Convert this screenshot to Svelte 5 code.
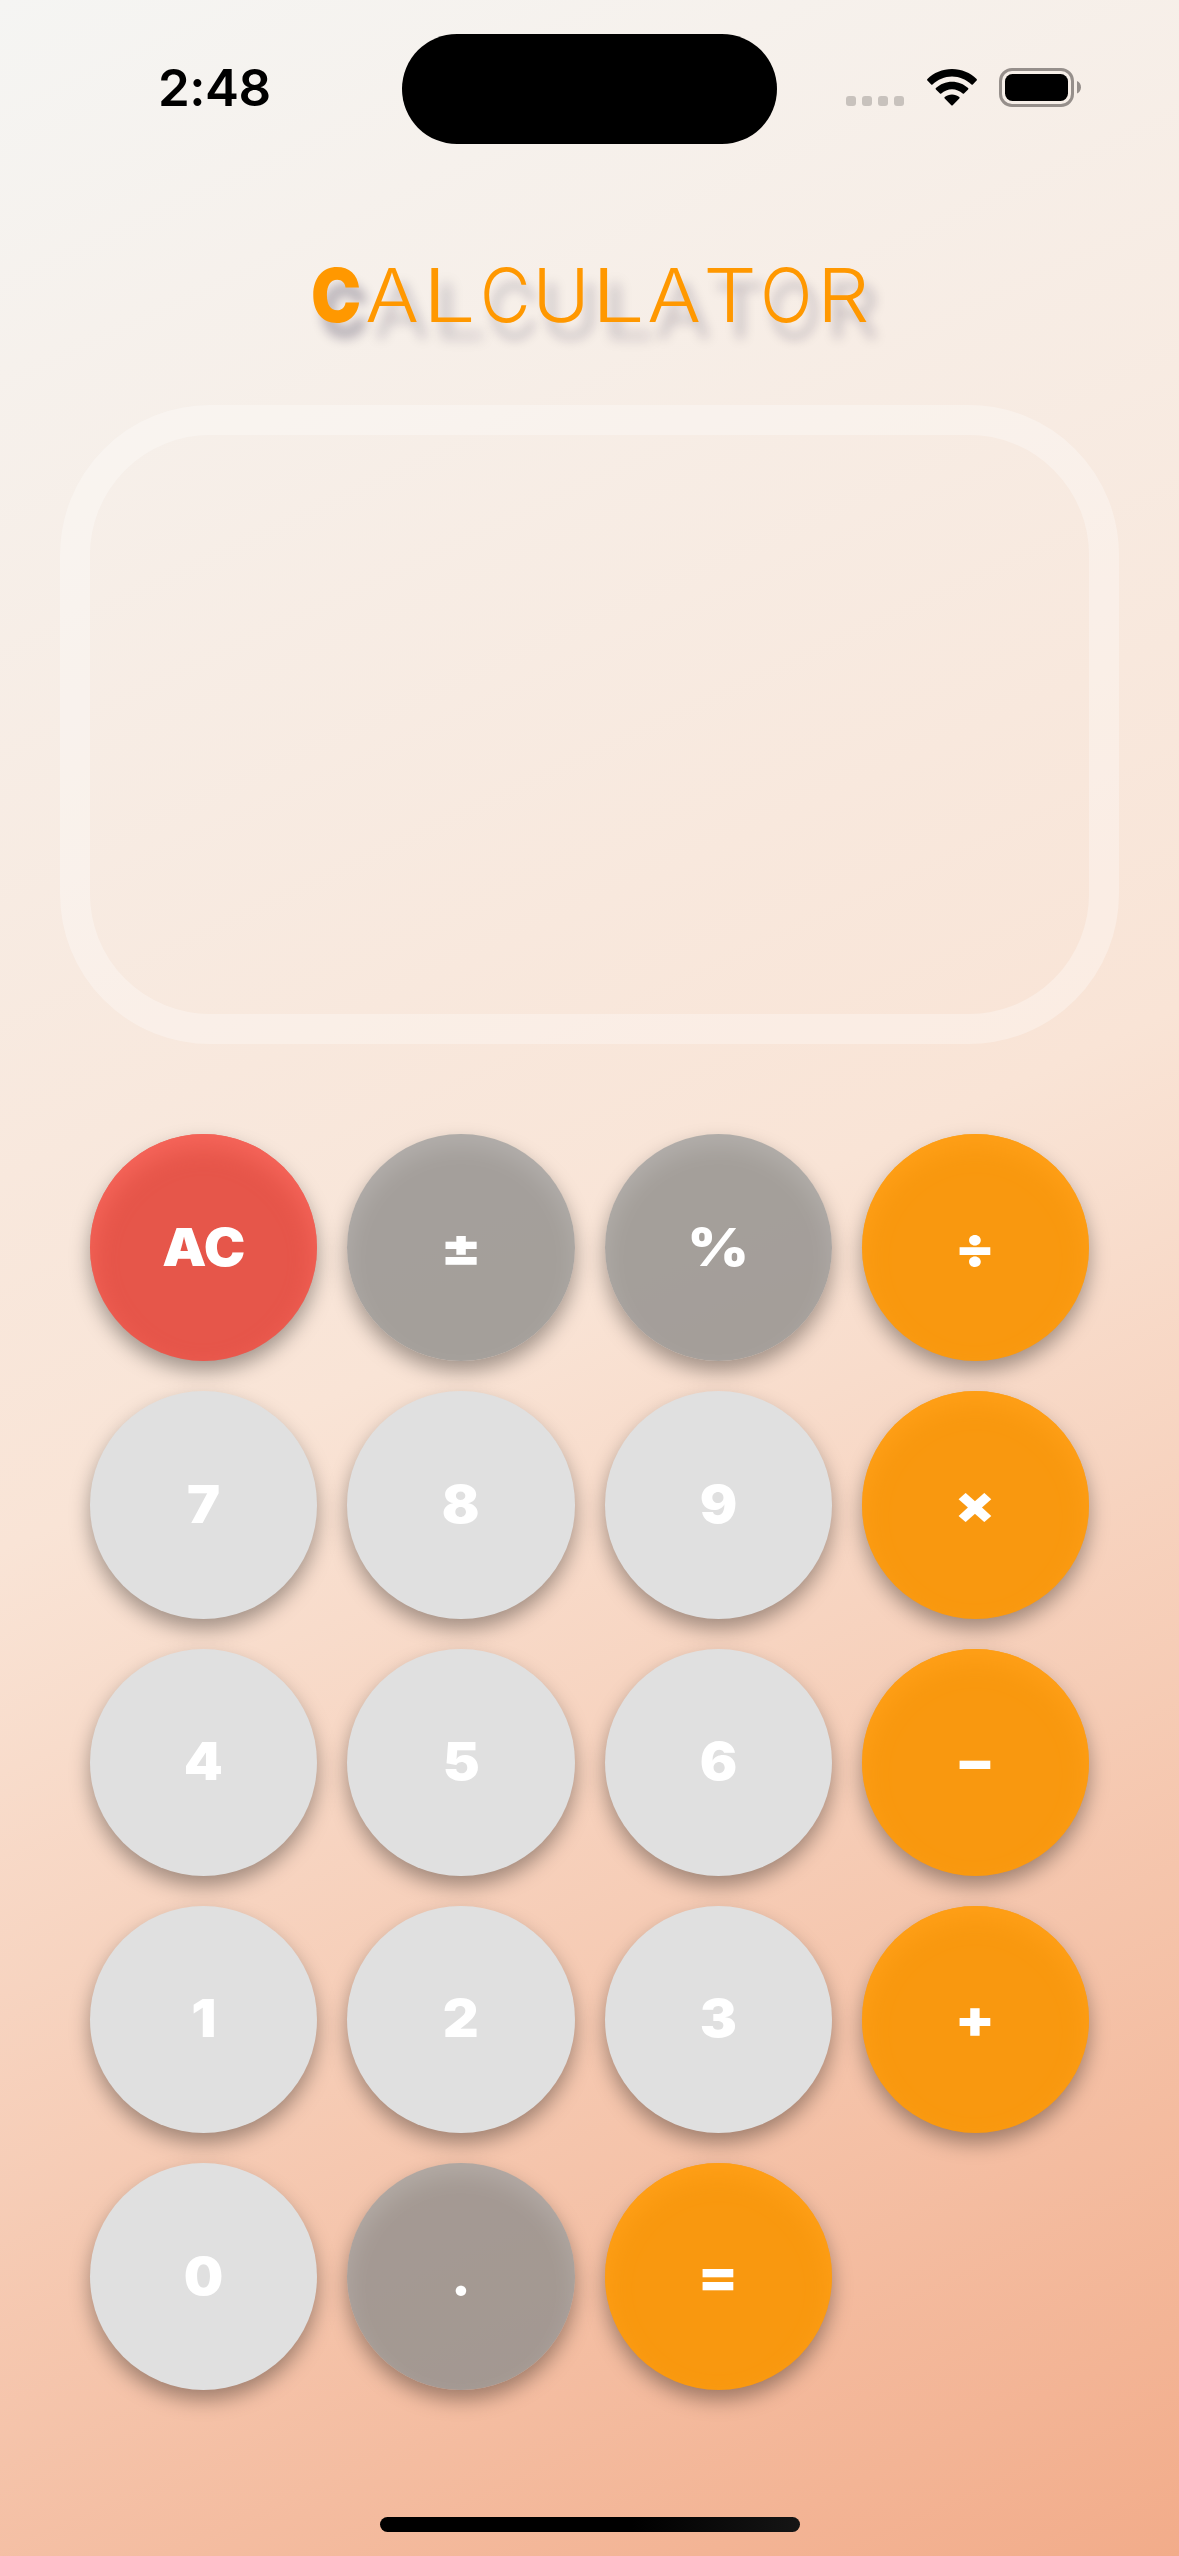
<script>
  const title = [...'CALCULATOR'];
  const keys = [
    { label: 'AC', kind: 'clear' },
    { label: '±', kind: 'util' },
    { label: '%', kind: 'util' },
    { label: '÷', kind: 'op' },
    { label: '7', kind: 'num' },
    { label: '8', kind: 'num' },
    { label: '9', kind: 'num' },
    { label: '×', kind: 'op' },
    { label: '4', kind: 'num' },
    { label: '5', kind: 'num' },
    { label: '6', kind: 'num' },
    { label: '−', kind: 'op' },
    { label: '1', kind: 'num' },
    { label: '2', kind: 'num' },
    { label: '3', kind: 'num' },
    { label: '+', kind: 'op' },
    { label: '0', kind: 'num' },
    { label: '.', kind: 'util dot' },
    { label: '=', kind: 'op' }
  ];
</script>

<main class="screen">
  <header class="status">
    <div class="time">2:48</div>
    <div class="island"></div>
    <div class="indicators">
      <div class="signal"><i></i><i></i><i></i><i></i></div>
      <svg class="wifi" width="50" height="37" viewBox="0 0 50 37" aria-hidden="true">
        <path d="M25 0C34.5 0 43.4 3.7 49.6 10.1Q50.3 10.9 49.6 11.6L45.8 15.4Q45.2 16 44.5 15.4C39.3 10.4 32.3 7.4 25 7.4S10.7 10.4 5.5 15.4Q4.8 16 4.2 15.4L.4 11.6Q-.3 10.9.4 10.1C6.6 3.7 15.5 0 25 0Z" />
        <path d="M25 12.7C31.1 12.7 36.8 15 41.1 19.1Q41.8 19.8 41.1 20.5L37 24.5Q36.4 25.1 35.7 24.5C32.8 21.8 29 20.2 25 20.2S17.2 21.8 14.3 24.5Q13.6 25.1 13 24.5L8.9 20.5Q8.2 19.8 8.9 19.1C13.2 15 18.9 12.7 25 12.7Z" />
        <path d="M25 25.4C27.7 25.4 30.3 26.4 32.3 28.1Q33 28.8 32.3 29.5L25.7 36.2Q25 36.9 24.3 36.2L17.7 29.5Q17 28.8 17.7 28.1C19.7 26.4 22.3 25.4 25 25.4Z" />
      </svg>
      <svg class="battery" width="83" height="39" viewBox="0 0 83 39" aria-hidden="true">
        <rect class="shell" x="1.5" y="1.5" width="72" height="36" rx="11.5" />
        <rect x="6" y="6" width="63" height="27" rx="7.5" />
        <path class="nub" d="M78 13C80.6 14.2 82 16.6 82 19.3S80.6 24.4 78 25.6Z" />
      </svg>
    </div>
  </header>

  <h1 class="title">
    {#each title as letter, i}<span class="letter {letter}" class:lead={i === 0}>{letter}</span>{/each}
  </h1>

  <section class="display"></section>

  <section class="keypad">
    {#each keys as key}
      <button class="key {key.kind}"><span class="label">{key.label}</span></button>
    {/each}
  </section>

  <footer class="home"><div class="bar"></div></footer>
</main>

<style>
  :global(body) {
    margin: 0;
  }
  .screen {
    box-sizing: border-box;
    width: 1179px;
    height: 2556px;
    display: flex;
    flex-direction: column;
    background: linear-gradient(155.24deg, #f5f5f3 0%, #f9e4d6 50%, #f2ac8a 100%);
    font-family: Inter, 'Liberation Sans', sans-serif;
    overflow: hidden;
  }
  .status {
    height: 177px;
    display: grid;
    grid-template-columns: 402px 375px 402px;
    align-items: start;
    flex: none;
  }
  .time {
    padding: 57px 0 0 158px;
    font-size: 51px;
    line-height: 62px;
    font-weight: 560;
    letter-spacing: -0.5px;
    color: #000;
  }
  .island {
    margin-top: 34px;
    height: 110px;
    border-radius: 55px;
    background: #000;
  }
  .indicators {
    display: flex;
    padding: 68px 0 0 69px;
  }
  .signal {
    display: flex;
    gap: 6px;
    padding-top: 28px;
    width: 80.5px;
  }
  .signal i {
    width: 10px;
    height: 10px;
    border-radius: 3px;
    background: #c8c2bd;
  }
  .wifi {
    margin: 0.7px 22.5px 0 0;
  }
  .shell {
    fill: none;
    stroke: #968f8b;
    stroke-width: 3;
  }
  .nub {
    fill: #968f8b;
  }
  .title {
    display: flex;
    justify-content: center;
    flex: none;
    margin: 0;
    height: 228px;
    padding-top: 73px;
    box-sizing: border-box;
    font-size: 74.5px;
    line-height: 90px;
    font-weight: 300;
    color: #ff9800;
    text-shadow: 9px 16px 11px rgba(20, 10, 50, 0.26);
  }
  /* Fixed-pitch cells; each glyph is stretched to an even width. */
  .letter {
    display: flex;
    justify-content: center;
    width: 56.3px;
  }
  .A {
    transform: scaleX(1.07);
  }
  .L {
    transform: scaleX(1.28);
  }
  .C {
    transform: scaleX(0.93);
  }
  .U {
    transform: scaleX(1.05);
  }
  .T {
    transform: scaleX(1.13);
  }
  .O {
    transform: scaleX(0.92);
  }
  .R {
    transform: scaleX(1.11);
  }
  .lead {
    font-weight: 900;
    transform: scaleX(0.9);
  }
  .display {
    flex: none;
    box-sizing: border-box;
    height: 639px;
    margin: 0 60px;
    border: 30px solid rgba(255, 255, 255, 0.3);
    border-radius: 150px;
  }
  .keypad {
    display: grid;
    grid-template-columns: repeat(4, 227.25px);
    grid-auto-rows: 227.25px;
    gap: 30px;
    padding: 90px 90px 0;
  }
  .key {
    margin: 0;
    padding: 0;
    border: 0;
    border-radius: 50%;
    font: 900 52px/1 Inter, 'Liberation Sans', sans-serif;
    color: #fff;
    box-shadow:
      0 10px 20px rgba(0, 0, 0, 0.35),
      inset 0 12px 24px rgba(255, 255, 255, 0.17);
  }
  .label {
    display: inline-block;
    transform: scaleX(1.07);
  }
  .clear {
    background: #e6564a;
    box-shadow:
      0 10px 20px rgba(0, 0, 0, 0.35),
      inset 0 12px 24px #f7665b;
  }
  .util {
    background: rgba(147, 144, 142, 0.83);
  }
  .util .label {
    transform: scaleX(1.13);
  }
  .dot .label {
    transform: none;
  }
  .op {
    background: #f9980f;
    box-shadow:
      0 10px 20px rgba(0, 0, 0, 0.35),
      inset 0 12px 24px #ffa018;
  }
  .op .label {
    transform: scaleX(1.12);
  }
  .num {
    background: #e0e0e0;
    box-shadow: 0 10px 20px rgba(0, 0, 0, 0.35);
  }
  .home {
    margin-top: auto;
    padding-bottom: 24px;
    display: flex;
    justify-content: center;
  }
  .bar {
    width: 420px;
    height: 15px;
    border-radius: 8px;
    background: linear-gradient(90deg, #000 60%, #151515);
  }
</style>
